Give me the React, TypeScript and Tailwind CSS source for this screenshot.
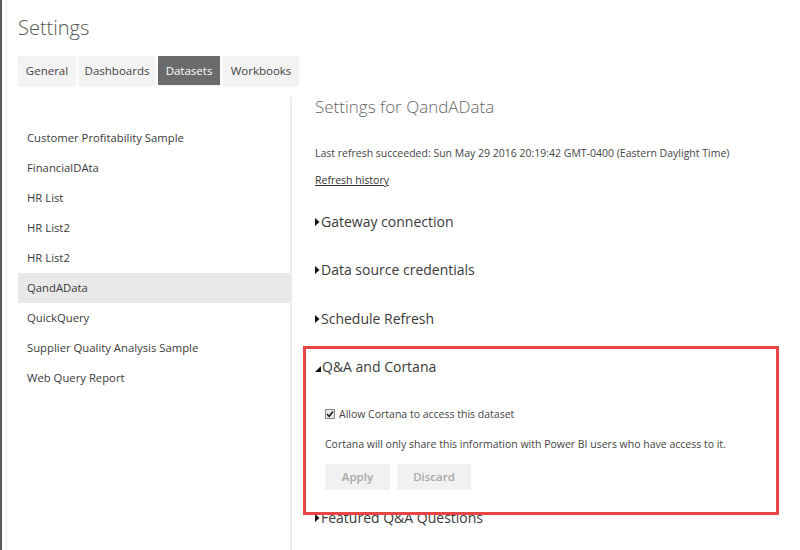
const datasets = [
  "Customer Profitability Sample",
  "FinancialDAta",
  "HR List",
  "HR List2",
  "HR List2",
  "QandAData",
  "QuickQuery",
  "Supplier Quality Analysis Sample",
  "Web Query Report",
];

const tabs = [
  { label: "General", w: "w-[58px]" },
  { label: "Dashboards", w: "w-[76px]" },
  { label: "Datasets", w: "w-[62px]" },
  { label: "Workbooks", w: "w-[76px]" },
];

const Collapsed = () => (
  <svg width="5" height="8" viewBox="0 0 5 8" className="mr-[1px] shrink-0">
    <path d="M0 0 L4.5 4 L0 8 Z" fill="#111" />
  </svg>
);

const Expanded = () => (
  <svg width="6" height="6" viewBox="0 0 6 6" className="mr-[1px] mt-[4px] shrink-0">
    <path d="M6 0 L6 6 L0 6 Z" fill="#111" />
  </svg>
);

const Section = ({ title, open, className }: { title: string; open?: boolean; className: string }) => (
  <div className={`flex items-center text-[14px] leading-[20px] text-[#3a3a3a] ${className}`}>
    {open ? <Expanded /> : <Collapsed />}
    <span>{title}</span>
  </div>
);

export default function App() {
  return (
    <div className="relative w-[800px] h-[550px] overflow-hidden bg-white border-l-2 border-[#5a5a5a] font-['Open_Sans','Noto_Sans',sans-serif] text-[#333]">
      <div className="absolute left-[4px] top-0 bottom-0 w-px bg-[#f0f0f0]" />
      <div className="pl-[16px]">
        <h1 className="mt-[14px] text-[20px] leading-[28px] font-light text-[#555]">Settings</h1>

        {/* Tabs */}
        <div className="mt-[14px] flex gap-[3px]">
          {tabs.map((t) => (
            <div
              key={t.label}
              className={`${t.w} h-[29px] flex items-center justify-center text-[11.5px] shadow-[0_1px_2px_rgba(0,0,0,0.08)] ${
                t.label === "Datasets" ? "bg-[#6b6b6b] text-white" : "bg-[#f3f3f3] text-[#444]"
              }`}
            >
              {t.label}
            </div>
          ))}
        </div>

        <div className="mt-[12px] flex">
          {/* Dataset list */}
          <div className="w-[274px] h-[460px] border-r-2 border-[#ebebeb] pt-[26px]">
            {datasets.map((d, i) => (
              <div
                key={i}
                className={`h-[30px] flex items-center pl-[9px] text-[11.3px] text-[#3a3a3a] ${
                  d === "QandAData" ? "bg-[#e9e9e9]" : ""
                }`}
              >
                {d}
              </div>
            ))}
          </div>

          {/* Settings panel */}
          <div className="pl-[23px]">
            <h2 className="text-[17px] leading-[20px] font-light text-[#666]">Settings for QandAData</h2>
            <p className="mt-[28px] text-[10.5px] leading-[16px] text-[#444]">
              Last refresh succeeded: Sun May 29 2016 20:19:42 GMT-0400 (Eastern Daylight Time)
            </p>
            <p className="mt-[11px] text-[10.5px] leading-[16px] text-[#333] underline">Refresh history</p>

            <Section title="Gateway connection" className="mt-[24px]" />
            <Section title="Data source credentials" className="mt-[28px]" />
            <Section title="Schedule Refresh" className="mt-[29px]" />
            <Section title="Q&A and Cortana" open className="mt-[28px]" />

            <div className="pl-[10px]">
              <label className="mt-[29px] flex items-center gap-[4px] text-[10.5px] leading-[16px] text-[#444]">
                <span className="w-[10px] h-[10px] border border-[#8a8a8a] bg-[#e6e6e6] flex items-center justify-center">
                  <svg width="8" height="8" viewBox="0 0 8 8">
                    <path d="M1 4.2 L3.2 6.3 L7 1.5" stroke="#222" strokeWidth="1.6" fill="none" />
                  </svg>
                </span>
                Allow Cortana to access this dataset
              </label>
              <p className="mt-[14px] text-[10.5px] leading-[16px] text-[#444]">
                Cortana will only share this information with Power BI users who have access to it.
              </p>
              <div className="mt-[12px] flex gap-[7px]">
                <button className="w-[65px] h-[26px] bg-[#f1f1f1] text-[11.5px] font-semibold text-[#a8a8a8]">Apply</button>
                <button className="w-[74px] h-[26px] bg-[#f1f1f1] text-[11.5px] font-semibold text-[#a8a8a8]">Discard</button>
              </div>
            </div>

            <Section title="Featured Q&A Questions" className="mt-[18px]" />
          </div>
        </div>
      </div>

      {/* annotation */}
      <div className="absolute left-[301px] top-[346px] w-[476px] h-[169px] border-[3px] border-[#e84545]" />
    </div>
  );
}
